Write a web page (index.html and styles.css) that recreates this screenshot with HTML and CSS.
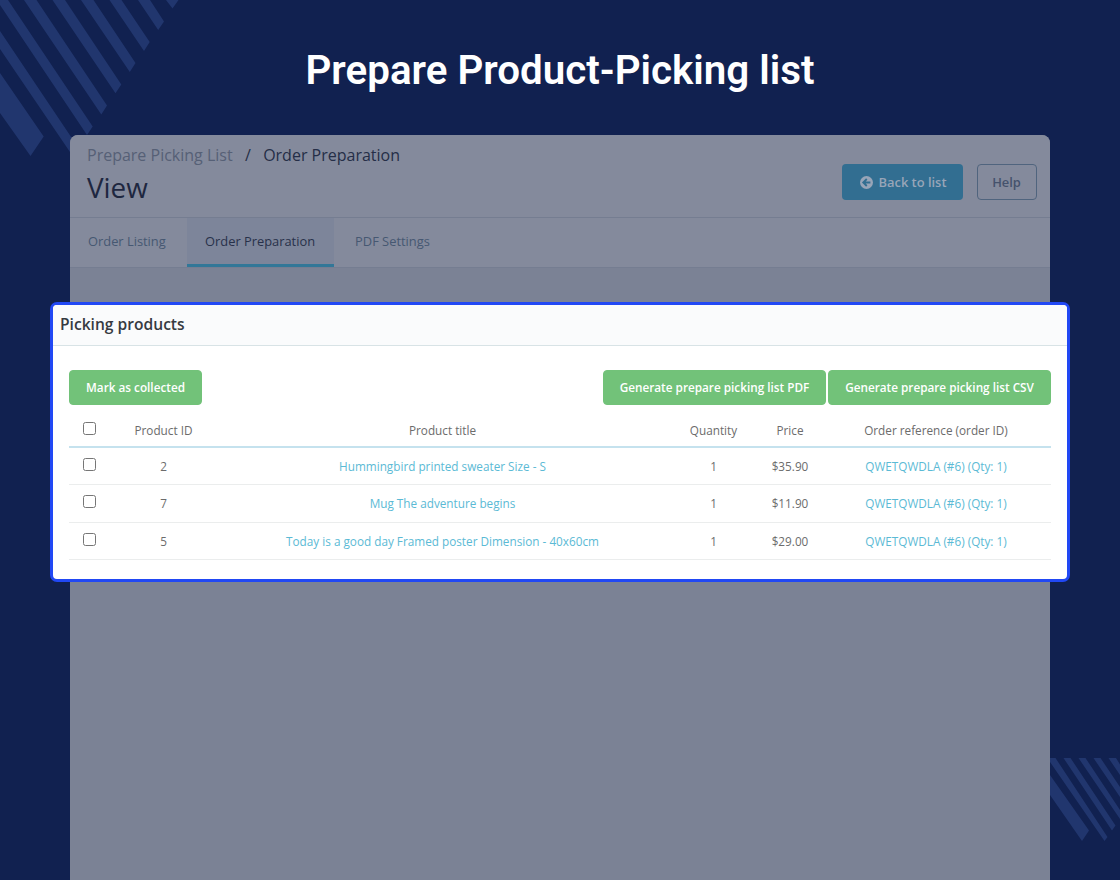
FILE: index.html
```html
<!DOCTYPE html>
<html lang="en">
<head>
  <meta charset="utf-8">
  <title>Prepare Product-Picking list</title>
  <link rel="stylesheet" href="styles.css">
</head>
<body>
  <svg class="stripes" width="1120" height="880" viewBox="0 0 1120 880">
    <path d="M0 73L43.7 136.5 30.5 156 0 113zM0 31L78.5 148 72.7 156 0 49zM0 0H8L92.7 126.5 87 135 0 5zM24 0H36.5L107 105.5 101.3 114.5zM52.5 0H65L121.3 84.5 115.5 93.3zM81 0H93.5L135.5 63 129.8 72zM109.5 0H121.5L149.7 42 144 51zM138 0H150L164 21.5 158.2 30zM166 0H178.5L172.5 8.5z"/>
    <path d="M1050 775L1089 830.5 1082 841 1050 795zM1050 758H1055.5L1107.5 837 1104.5 841 1050 762zM1063.5 758H1070.5L1115.5 825.5 1112 830.5zM1078.5 758H1085.5L1120 810V819zM1093.5 758H1100.5L1120 787V797zM1108.5 758H1116L1120 764.5V775z"/>
  </svg>

  <h1 class="title">Prepare Product-Picking list</h1>

  <div class="page">
    <div class="page-head">
      <div>
        <div class="breadcrumb"><a href="#">Prepare Picking List</a><span class="slash">/</span><span>Order Preparation</span></div>
        <h2>View</h2>
      </div>
      <div class="toolbar">
        <a href="#" class="btn-back">
          <svg width="13" height="13" viewBox="0 0 14 14">
            <circle cx="7" cy="7" r="7"/>
            <path d="M11.2 7H4.2M7.3 3.2L3.5 7l3.8 3.8"/>
          </svg>
          Back to list</a>
        <a href="#" class="btn-help">Help</a>
      </div>
    </div>

    <div class="tabs">
      <a href="#" class="tab">Order Listing</a>
      <a href="#" class="tab active">Order Preparation</a>
      <a href="#" class="tab">PDF Settings</a>
    </div>

    <div class="card">
      <h3>Picking products</h3>
      <div class="card-body">
        <div class="actions">
          <button class="btn mark">Mark as collected</button>
          <button class="btn">Generate prepare picking list PDF</button>
          <button class="btn">Generate prepare picking list CSV</button>
        </div>
        <table>
          <colgroup>
            <col class="col-check"><col class="col-id"><col class="col-title">
            <col class="col-qty"><col class="col-price"><col class="col-ref">
          </colgroup>
          <thead>
            <tr>
              <th><input type="checkbox"></th>
              <th>Product ID</th>
              <th>Product title</th>
              <th>Quantity</th>
              <th>Price</th>
              <th>Order reference (order ID)</th>
            </tr>
          </thead>
          <tbody>
            <tr>
              <td><input type="checkbox"></td>
              <td>2</td>
              <td><a href="#">Hummingbird printed sweater Size - S</a></td>
              <td>1</td>
              <td>$35.90</td>
              <td><a href="#">QWETQWDLA (#6) (Qty: 1)</a></td>
            </tr>
            <tr class="tall">
              <td><input type="checkbox"></td>
              <td>7</td>
              <td><a href="#">Mug The adventure begins</a></td>
              <td>1</td>
              <td>$11.90</td>
              <td><a href="#">QWETQWDLA (#6) (Qty: 1)</a></td>
            </tr>
            <tr>
              <td><input type="checkbox"></td>
              <td>5</td>
              <td><a href="#">Today is a good day Framed poster Dimension - 40x60cm</a></td>
              <td>1</td>
              <td>$29.00</td>
              <td><a href="#">QWETQWDLA (#6) (Qty: 1)</a></td>
            </tr>
          </tbody>
        </table>
      </div>
    </div>
  </div>
</body>
</html>
```
FILE: styles.css
```css
* {
  box-sizing: border-box;
}

body {
  margin: 0;
  height: 880px;
  overflow: hidden;
  display: flex;
  flex-direction: column;
  background-color: #112150;
  font-family: "Open Sans", sans-serif;
}

a {
  text-decoration: none;
}

.stripes {
  position: absolute;
  top: 0;
  left: 0;
  z-index: -1;
  fill: #21366e;
}

.title {
  margin: 0;
  height: 135px;
  padding-top: 47px;
  font-family: Roboto, sans-serif;
  font-size: 40.35px;
  font-weight: 600;
  line-height: 48px;
  text-align: center;
  color: white;
}

.page {
  flex: 1;
  width: 980px;
  margin: 0 auto;
  background-color: #7b8295;
  border-radius: 8px 8px 0 0;
}

.page-head {
  display: flex;
  justify-content: space-between;
  height: 83px;
  padding: 9px 13.5px 0 17px;
  background-color: #848a9c;
  border-bottom: 1px solid #757d91;
  border-radius: 8px 8px 0 0;
}

.breadcrumb {
  font-size: 16px;
  line-height: 22px;
  color: #252e47;
}

.breadcrumb a {
  color: #566076;
}

.slash {
  margin: 0 12.3px;
}

.page-head h2 {
  margin: 3px 0 0;
  font-size: 27.8px;
  font-weight: 400;
  line-height: 36px;
  color: #1e2740;
}

.toolbar {
  display: flex;
  gap: 14px;
  padding-top: 20.3px;
}

.btn-back,
.btn-help {
  display: flex;
  align-items: center;
  justify-content: center;
  height: 36px;
  padding-bottom: 1px;
  border-radius: 4px;
  font-size: 12.9px;
  font-weight: 600;
}

.btn-back {
  width: 121px;
  padding-left: 2px;
  gap: 6px;
  background-color: #326e91;
  color: #98a5b8;
}

.btn-back svg {
  margin-top: 1px;
  fill: #98a5b8;
}

.btn-back svg path {
  fill: none;
  stroke: #326e91;
  stroke-width: 2;
}

.btn-help {
  width: 60px;
  border: 1px solid #50647e;
  color: #45526c;
}

.tabs {
  display: flex;
  height: 50px;
  background-color: #848a9c;
  border-bottom: 1px solid #757d91;
}

.tab {
  height: 49px;
  padding: 0 21px;
  font-size: 12.87px;
  line-height: 47px;
  color: #465872;
}

.tab:first-child {
  padding-left: 18px;
}

.tab.active {
  padding: 0 19px 0 18.3px;
  background-color: #7d859a;
  border-bottom: 3px solid #327798;
  color: #28314a;
}

.card {
  width: 1020px;
  height: 280px;
  margin: 34px -20px 0;
  border: 3px solid #2148f4;
  border-radius: 7px;
  background-color: white;
}

.card h3 {
  margin: 0;
  height: 41px;
  padding-left: 7px;
  background-color: #fafbfc;
  border-bottom: 1px solid #d8e3e6;
  border-radius: 4px 4px 0 0;
  font-size: 15.6px;
  font-weight: 600;
  line-height: 38px;
  color: #363a41;
}

.card-body {
  padding: 24px 16px 0;
}

.actions {
  display: flex;
  gap: 2px;
}

.btn {
  width: 223px;
  height: 35px;
  padding: 0 0 2px;
  border: 1px solid #72c279;
  border-radius: 4px;
  background-color: #72c279;
  font-family: inherit;
  font-size: 11.75px;
  font-weight: 600;
  color: white;
}

.btn.mark {
  width: 133px;
  margin-right: auto;
}

table {
  width: 982px;
  margin-top: 8px;
  border-collapse: separate;
  border-spacing: 0;
  table-layout: fixed;
  font-size: 11.75px;
  line-height: 16px;
  color: #6c6c6c;
}

.col-check { width: 41px; }
.col-id { width: 107px; }
.col-title { width: 451px; }
.col-qty { width: 91px; }
.col-price { width: 62px; }
.col-ref { width: 230px; }

th,
td {
  height: 37px;
  padding: 0;
  border-bottom: 1px solid #ebeded;
  font-weight: 400;
  text-align: center;
}

th {
  height: 35px;
  padding-top: 1px;
  border-bottom: 2px solid #c5e2ee;
}

.tall td {
  height: 38px;
  padding-bottom: 1px;
}

td a {
  color: #5bbad5;
}

input {
  display: block;
  width: 13px;
  height: 13px;
  margin: 0 auto 4px;
}
```
